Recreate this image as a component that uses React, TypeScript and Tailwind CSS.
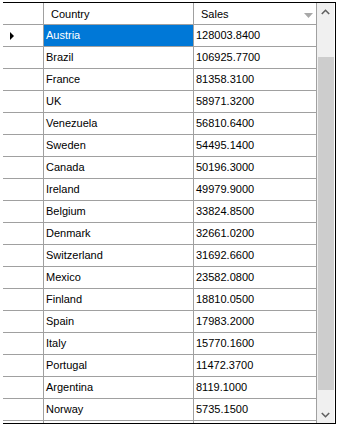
const rows: [string, string][] = [
  ["Austria", "128003.8400"],
  ["Brazil", "106925.7700"],
  ["France", "81358.3100"],
  ["UK", "58971.3200"],
  ["Venezuela", "56810.6400"],
  ["Sweden", "54495.1400"],
  ["Canada", "50196.3000"],
  ["Ireland", "49979.9000"],
  ["Belgium", "33824.8500"],
  ["Denmark", "32661.0200"],
  ["Switzerland", "31692.6600"],
  ["Mexico", "23582.0800"],
  ["Finland", "18810.0500"],
  ["Spain", "17983.2000"],
  ["Italy", "15770.1600"],
  ["Portugal", "11472.3700"],
  ["Argentina", "8119.1000"],
  ["Norway", "5735.1500"],
  ["", ""],
];

const line = "border-[#a0a0a0]";

export default function App() {
  return (
    <div
      className="w-[338px] h-[428px] bg-white pt-[2px] pl-[3px] text-[11px] text-black"
      style={{ fontFamily: '"Liberation Sans", Arial, sans-serif' }}
    >
      <div className="w-[333px] h-[422px] flex border-t border-r border-b border-black border-l-[#a0a0a0]">
        {/* grid */}
        <div className="w-[314px] h-[420px] overflow-hidden flex flex-col">
          <div className={`flex h-[22px] shrink-0 border-b ${line}`}>
            <div className={`w-[41px] border-r ${line}`} />
            <div className={`w-[150px] border-r ${line} flex items-center pl-[7px] pt-[2px]`}>Country</div>
            <div className={`w-[123px] border-r ${line} flex items-center justify-between pl-[7px] pr-[3px] pt-[2px]`}>
              <span>Sales</span>
              <svg width="9" height="5" viewBox="0 0 9 5" className="mt-[1px]">
                <polygon points="0,0 9,0 4.5,5" fill="#a8a8a8" />
              </svg>
            </div>
          </div>

          {rows.map(([country, sales], i) => {
            const current = i === 0;
            return (
              <div key={i} className={`flex h-[22px] shrink-0 border-b ${line}`}>
                <div className={`w-[41px] border-r ${line} flex items-center pl-[7px]`}>
                  {current && (
                    <svg width="5" height="8" viewBox="0 0 5 8">
                      <polygon points="0,0 4,4 0,8" fill="#000" />
                    </svg>
                  )}
                </div>
                <div
                  className={`w-[150px] border-r ${line} flex items-center pl-[2px] ${
                    current ? "bg-[#0078d7] text-white" : ""
                  }`}
                >
                  {country}
                </div>
                <div className={`w-[123px] border-r ${line} flex items-center pl-[2px]`}>{sales}</div>
              </div>
            );
          })}
        </div>

        {/* vertical scrollbar */}
        <div className="w-[17px] h-[420px] bg-[#f0f0f0] flex flex-col">
          <div className="h-[17px] flex items-center justify-center">
            <svg width="9" height="6" viewBox="0 0 9 6">
              <polyline points="0.8,5 4.5,1.3 8.2,5" fill="none" stroke="#606060" strokeWidth="1.6" />
            </svg>
          </div>
          <div className="flex-1">
            <div className="ml-[1px] mt-[37px] h-[333px] bg-[#cdcdcd]" />
          </div>
          <div className="h-[17px] flex items-center justify-center">
            <svg width="9" height="6" viewBox="0 0 9 6">
              <polyline points="0.8,1 4.5,4.7 8.2,1" fill="none" stroke="#606060" strokeWidth="1.6" />
            </svg>
          </div>
        </div>
      </div>
    </div>
  );
}
